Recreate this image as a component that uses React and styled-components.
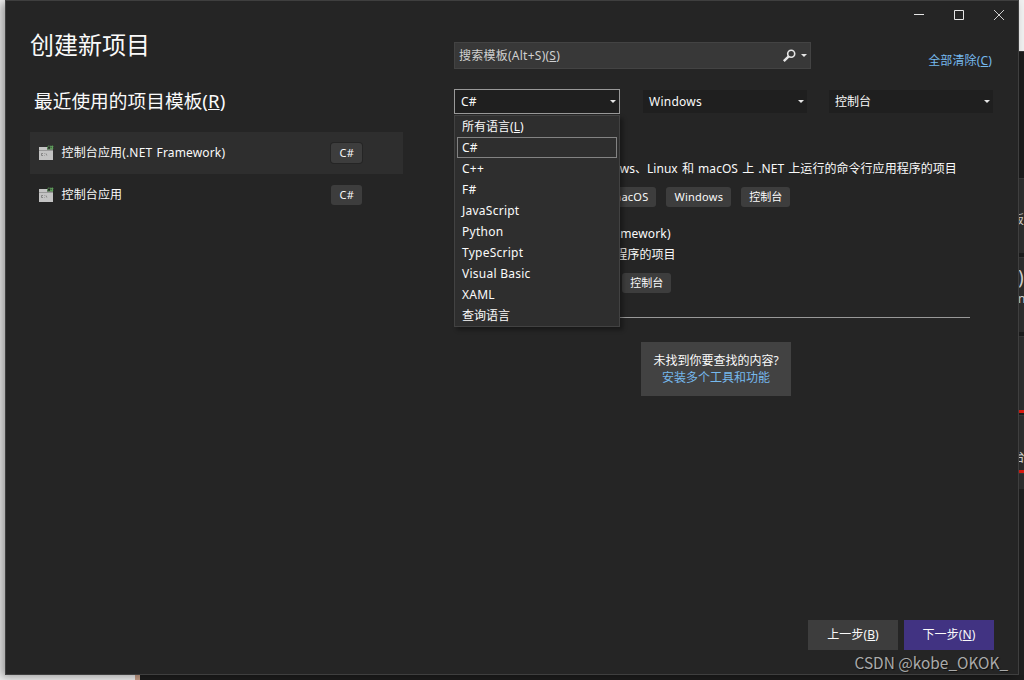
import React, { useState } from "react";
import styled, { createGlobalStyle } from "styled-components";

const languages = [
  { name: "所有语言", hotkey: "L" },
  { name: "C#" },
  { name: "C++" },
  { name: "F#" },
  { name: "JavaScript" },
  { name: "Python" },
  { name: "TypeScript" },
  { name: "Visual Basic" },
  { name: "XAML" },
  { name: "查询语言" },
];

const recentTemplates = [
  { name: "控制台应用(.NET Framework)", language: "C#" },
  { name: "控制台应用", language: "C#" },
];

const templates = [
  {
    name: "控制台应用",
    description: "用于创建可在 Windows、Linux 和 macOS 上 .NET 上运行的命令行应用程序的项目",
    tags: ["C#", "Linux", "macOS", "Windows", "控制台"],
  },
  {
    name: "控制台应用(.NET Framework)",
    description: "用于创建命令行应用程序的项目",
    tags: ["C#", "Windows", "控制台"],
  },
];

// Latin text is spaced a little wider than Chinese text
const isLatin = (text) => /^[\x20-\x7e]+$/.test(text);

const ConsoleIcon = () => (
  <svg width="16" height="16" viewBox="0 0 16 16">
    <path d="M1 2h8v2h6v11H1z" fill="#c3c3c3" />
    <path d="M1 5.5h14" stroke="#999" />
    <path d="M5 8.5H3.5v2H5M6.5 8.5v.5M6.5 10v.5M8 8.5l.8 2" stroke="#777" strokeWidth="0.8" fill="none" />
    <path d="M9 0h6v5H9z" fill="#2e2e2e" opacity="0.5" />
    <path d="M11.6 1.2h-1.2l-.9.8v1.4l.9.8h1.2M12.9.6v4M14.5.6v4M12.2 1.7h3.2M12 3.6h3.2" stroke="#5f9f5c" strokeWidth="1" fill="none" />
  </svg>
);

const SearchIcon = () => (
  <svg width="14" height="14" viewBox="0 0 14 14">
    <circle cx="9.2" cy="4.8" r="3.5" stroke="#e6e6e6" strokeWidth="1.6" fill="none" />
    <path d="M6.7 7.4L1.8 12.2" stroke="#e6e6e6" strokeWidth="2.4" />
  </svg>
);

const Arrow = () => (
  <svg width="6" height="3" viewBox="0 0 6 3">
    <path d="M0 0h6L3 3z" fill="#e6e6e6" />
  </svg>
);

const Label = ({ text, hotkey }) => (
  <>
    {text}
    {hotkey && (
      <>
        (<Hotkey>{hotkey}</Hotkey>)
      </>
    )}
  </>
);

const LanguageSelect = () => {
  const [selected, setSelected] = useState("C#");
  const [isOpen, setIsOpen] = useState(true);

  const handleSelect = (name) => {
    setSelected(name);
    setIsOpen(false);
  };

  return (
    <SelectWrapper>
      <Select $active={isOpen} $latin={isLatin(selected)} onClick={() => setIsOpen(!isOpen)}>
        {selected}
        <Arrow />
      </Select>
      {isOpen && (
        <Menu>
          {languages.map((item) => (
            <MenuItem
              key={item.name}
              $selected={item.name === selected}
              $latin={isLatin(item.name)}
              onClick={() => handleSelect(item.name)}
            >
              <Label text={item.name} hotkey={item.hotkey} />
            </MenuItem>
          ))}
        </Menu>
      )}
    </SelectWrapper>
  );
};

const App = () => {
  return (
    <>
      <GlobalStyle />
      <Desktop>
        <Window>
          <Caption>
            <CaptionButton>
              <svg width="10" height="10" viewBox="0 0 10 10">
                <path d="M0 4.5h10" stroke="#e6e6e6" />
              </svg>
            </CaptionButton>
            <CaptionButton>
              <svg width="10" height="10" viewBox="0 0 10 10">
                <path d="M.5.5h9v9h-9z" stroke="#e6e6e6" fill="none" />
              </svg>
            </CaptionButton>
            <CaptionButton>
              <svg width="10" height="10" viewBox="0 0 10 10">
                <path d="M0 0l10 10M10 0L0 10" stroke="#d0d0d0" />
              </svg>
            </CaptionButton>
          </Caption>
          <Body>
            <Recent>
              <Title>创建新项目</Title>
              <Subtitle>
                <Label text="最近使用的项目模板" hotkey="R" />
              </Subtitle>
              {recentTemplates.map((item, index) => (
                <RecentRow key={item.name} $highlight={index === 0}>
                  <ConsoleIcon />
                  <RecentName>{item.name}</RecentName>
                  <Tag $latin $outlined={index === 0}>
                    {item.language}
                  </Tag>
                </RecentRow>
              ))}
            </Recent>
            <Browser>
              <SearchRow>
                <SearchBox>
                  <SearchText>
                    <Label text="搜索模板(Alt+S)" hotkey="S" />
                  </SearchText>
                  <SearchIcon />
                  <Arrow />
                </SearchBox>
                <ClearLink>
                  <Label text="全部清除" hotkey="C" />
                </ClearLink>
              </SearchRow>
              <Filters>
                <LanguageSelect />
                <Select $latin>
                  Windows
                  <Arrow />
                </Select>
                <Select>
                  控制台
                  <Arrow />
                </Select>
              </Filters>
              <Results>
                {templates.map((item) => (
                  <Template key={item.name}>
                    <TemplateName>{item.name}</TemplateName>
                    <TemplateLine>{item.description}</TemplateLine>
                    <Tags>
                      {item.tags.map((tag) => (
                        <Tag key={tag} $latin={isLatin(tag)}>
                          {tag}
                        </Tag>
                      ))}
                    </Tags>
                  </Template>
                ))}
                <Divider />
                <NotFound>
                  <span>未找到你要查找的内容?</span>
                  <InstallLink>安装多个工具和功能</InstallLink>
                </NotFound>
              </Results>
            </Browser>
          </Body>
          <Footer>
            <Button>
              <Label text="上一步" hotkey="B" />
            </Button>
            <Button $primary>
              <Label text="下一步" hotkey="N" />
            </Button>
          </Footer>
        </Window>
        <Behind>
          <BehindPage />
          <BehindGap $height={127} $edge />
          <BehindCard $height={75}>
            <BehindText $size={12} $top={34} $shift={-7}>板</BehindText>
          </BehindCard>
          <BehindGap $height={4} />
          <BehindCard $height={75}>
            <BehindText $size={19} $top={9} $shift={-1}>)</BehindText>
            <BehindText $size={12} $top={4} $shift={-1}>n</BehindText>
          </BehindCard>
          <BehindGap $height={4} />
          <BehindCard $height={77} $marked />
          <BehindGap $height={2} />
          <BehindCard $height={55}>
            <BehindText $size={13} $top={33} $shift={-7}>台</BehindText>
          </BehindCard>
          <BehindMark />
          <BehindCard $height={16} />
        </Behind>
        <Below />
        <Watermark>CSDN @kobe_OKOK_</Watermark>
      </Desktop>
    </>
  );
};

export default App;

const GlobalStyle = createGlobalStyle`
  * {
    box-sizing: border-box;
  }
  body {
    margin: 0;
    overflow: hidden;
    background: #1f1f1f;
    color: #fafafa;
    font: 12px/16px "Noto Sans", "Noto Sans CJK SC", sans-serif;
  }
  svg {
    flex: none;
    display: block;
  }
`;

const Desktop = styled.div`
  position: relative;
  display: grid;
  grid-template-columns: 1014px 5px;
  grid-template-rows: 675px 5px;
  width: 1024px;
  height: 680px;
  padding-left: 5px;
  overflow: hidden;
  background: linear-gradient(90deg, #f0f0f0 135px, #c9a18b 135px, #c9a18b 140px, #1d1d1d 140px);
`;

const Window = styled.div`
  position: relative;
  z-index: 1;
  display: flex;
  flex-direction: column;
  border: 1px solid #3f3f3f;
  background: #252525;
  box-shadow: -4px 2px 9px rgba(0, 0, 0, 0.35);
`;

const Caption = styled.div`
  display: flex;
  justify-content: flex-end;
  height: 30px;
  margin-right: -1px;
`;

const CaptionButton = styled.div`
  display: flex;
  align-items: center;
  justify-content: center;
  width: 40px;
  height: 28px;
`;

const Body = styled.div`
  display: flex;
  flex: 1;
  gap: 51px;
  padding-left: 24px;
`;

const Recent = styled.div`
  width: 373px;
`;

const Title = styled.h1`
  margin: 0;
  font-size: 24px;
  font-weight: 400;
  line-height: 28px;
`;

const Subtitle = styled.h2`
  margin: 26px 0 15px 4px;
  font-size: 18.67px;
  font-weight: 400;
  line-height: 32px;
  letter-spacing: 0.05px;
`;

const RecentRow = styled.div`
  display: flex;
  align-items: center;
  height: 42px;
  padding: 0 41px 0 8px;
  background: ${(props) => (props.$highlight ? "#2e2e2e" : "transparent")};
`;

const RecentName = styled.span`
  flex: 1;
  margin-left: 7.5px;
  letter-spacing: 0.15px;
  word-spacing: 1px;
`;

const Tag = styled.span`
  height: 20px;
  padding: 0 8px;
  border-radius: 3px;
  background: #3d3d3d;
  font-size: 11px;
  line-height: 20px;
  letter-spacing: ${(props) => (props.$latin ? "0.25px" : "0")};
  white-space: nowrap;
  box-shadow: ${(props) => (props.$outlined ? "0 0 0 1px #252525" : "none")};
`;

const Hotkey = styled.span`
  text-decoration: underline;
  text-underline-offset: 1px;
`;

const Browser = styled.div`
  width: 540px;
  padding-top: 11px;
`;

const SearchRow = styled.div`
  display: flex;
  justify-content: space-between;
  padding-right: 2px;
`;

const SearchBox = styled.div`
  display: flex;
  align-items: center;
  gap: 5px;
  width: 357px;
  height: 27px;
  padding: 0 3px 0 4px;
  border: 1px solid #434343;
  background: #383838;
`;

const SearchText = styled.span`
  flex: 1;
  color: #d0d0d0;
  letter-spacing: 0.25px;
`;

const ClearLink = styled.a`
  padding-top: 11px;
  color: #76b9ed;
  letter-spacing: 0.15px;
`;

const Filters = styled.div`
  display: grid;
  grid-template-columns: 188px 186px 166px;
  margin-top: 20px;
`;

const SelectWrapper = styled.div`
  position: relative;
`;

const Select = styled.div`
  display: flex;
  align-items: center;
  justify-content: space-between;
  width: 166px;
  height: 25px;
  padding: 0 3px 0 6px;
  border: 1px solid ${(props) => (props.$active ? "#999" : "transparent")};
  background: #1f1f1f;
  background-clip: padding-box;
  letter-spacing: ${(props) => (props.$latin ? "0.25px" : "0")};
`;

const Menu = styled.div`
  position: absolute;
  top: 26px;
  left: 0;
  z-index: 2;
  width: 166px;
  padding: 0 2px;
  border: 1px solid #424242;
  background: #2e2e2e;
  box-shadow: 3px 3px 4px rgba(0, 0, 0, 0.35);
`;

const MenuItem = styled.div`
  height: 21px;
  padding-left: 4px;
  border: 1px solid ${(props) => (props.$selected ? "#838383" : "transparent")};
  line-height: 19px;
  letter-spacing: ${(props) => (props.$latin ? "0.25px" : "0")};
`;

const Results = styled.div`
  width: 508px;
  margin: 23px 0 0 8px;
`;

const Template = styled.div`
  height: 86px;
  padding-left: 45px;
`;

const TemplateLine = styled.div`
  height: 21px;
  line-height: 21px;
  letter-spacing: 0.04px;
  word-spacing: 1px;
  white-space: nowrap;
`;

const TemplateName = styled(TemplateLine)`
  letter-spacing: 0.15px;
`;

const Tags = styled.div`
  display: flex;
  gap: 10px;
  margin-top: 8px;
`;

const Divider = styled.div`
  height: 1px;
  margin-top: 8px;
  background: #999;
`;

const NotFound = styled.div`
  display: flex;
  flex-direction: column;
  align-items: center;
  width: 150px;
  height: 54px;
  margin: 24px auto 0;
  padding-top: 10px;
  background: #424242;
  line-height: 17px;
`;

const InstallLink = styled.a`
  color: #76b9ed;
`;

const Footer = styled.div`
  display: flex;
  justify-content: flex-end;
  gap: 6px;
  padding: 0 24px 24px 0;
`;

const Button = styled.div`
  width: 90px;
  height: 30px;
  background: ${(props) => (props.$primary ? "#413382" : "#3d3d3d")};
  line-height: 30px;
  letter-spacing: 0.1px;
  text-align: center;
`;

const Behind = styled.div`
  overflow: hidden;
  background: #1f1f1f;
`;

const BehindPage = styled.div`
  height: 51px;
  background: #f0f0f0;
`;

const BehindGap = styled.div`
  height: ${(props) => props.$height}px;
  border-top: ${(props) => (props.$edge ? "1px solid #3a3a3a" : "none")};
  background: #1c1c1c;
`;

const BehindCard = styled.div`
  height: ${(props) => props.$height}px;
  overflow: hidden;
  border-top: 1px solid #383838;
  border-bottom: ${(props) => (props.$marked ? "3px solid #dc1a10" : "none")};
  background: #2d2d2d;
`;

const BehindText = styled.div`
  margin: ${(props) => props.$top}px 0 0 ${(props) => props.$shift}px;
  color: #d0d0d0;
  font-size: ${(props) => props.$size}px;
  line-height: 1.1;
`;

const BehindMark = styled.div`
  height: 3px;
  background: #dc1a10;
`;

const Below = styled.div`
  grid-column: 1 / -1;
`;

const Watermark = styled.div`
  position: absolute;
  right: 16px;
  bottom: 8px;
  z-index: 3;
  color: #aaa;
  font: 15.4px/20px "Noto Sans CJK SC", "Noto Sans", sans-serif;
  text-shadow: 1px 1px 1px rgba(0, 0, 0, 0.6);
`;
